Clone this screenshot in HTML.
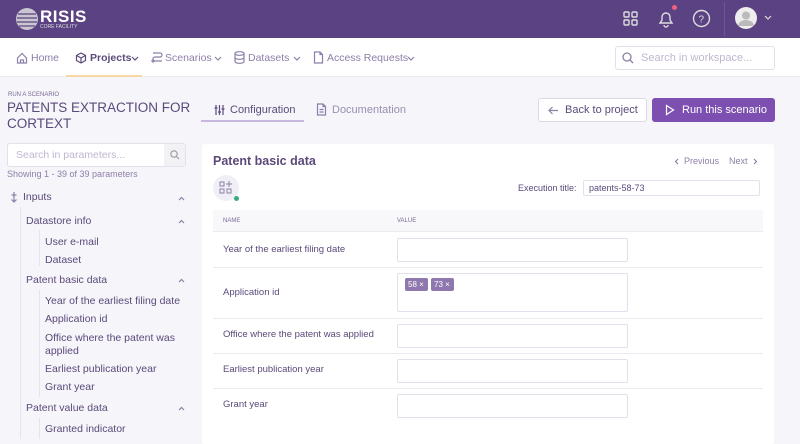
<!DOCTYPE html><html><head><style>
*{box-sizing:border-box;margin:0;padding:0}
body{width:800px;height:439px;overflow:hidden;background:#f5f5fa;font-family:"Liberation Sans",sans-serif;color:#5b4a7a;position:relative}
.a{position:absolute}
.t{position:absolute;white-space:nowrap}
svg.i{position:absolute;fill:none;stroke:#8d7fa8;stroke-width:1.2}
</style></head><body>
<div class="a" style="left:0;top:0;width:800px;height:38px;background:#5b4282"></div>
<svg class="a" style="left:15px;top:7px" width="24" height="24"><circle cx="12" cy="12" r="11" fill="#ddd" opacity=".85"/><g stroke="#5b4282" stroke-width="1.2"><line x1="3" y1="7" x2="21" y2="7"/><line x1="2" y1="11" x2="22" y2="11"/><line x1="2" y1="15" x2="22" y2="15"/><line x1="4" y1="19" x2="20" y2="19"/></g></svg>
<div class="t" style="left:40px;top:7px;color:#fff;font-size:17px;font-weight:bold;letter-spacing:0.5px">RISIS</div>
<div class="t" style="left:40px;top:24px;color:#ddd;font-size:5px">CORE FACILITY</div>
<svg class="a" style="left:622px;top:10px" width="18" height="18" fill="none" stroke="#ddd" stroke-width="1.4"><rect x="2" y="2" width="5" height="5" rx="1"/><rect x="10" y="2" width="5" height="5" rx="1"/><rect x="2" y="10" width="5" height="5" rx="1"/><rect x="10" y="10" width="5" height="5" rx="1"/></svg>
<svg class="a" style="left:656px;top:8px" width="20" height="20" fill="none" stroke="#ddd" stroke-width="1.4"><path d="M4 15h12l-2-3V9a4 4 0 0 0-8 0v3z"/><path d="M8 17a2 2 0 0 0 4 0"/></svg>
<div class="a" style="left:672px;top:5px;width:5px;height:5px;border-radius:50%;background:#f06080"></div>
<svg class="a" style="left:692px;top:9px" width="19" height="19" fill="none" stroke="#ddd" stroke-width="1.4"><circle cx="9.5" cy="9.5" r="8"/><text x="6.5" y="13.5" font-size="10" fill="#ddd" stroke="none" font-family="Liberation Sans">?</text></svg>
<div class="a" style="left:724px;top:2px;width:1px;height:34px;background:#6e5894"></div>
<svg class="a" style="left:735px;top:7px" width="22" height="22"><circle cx="11" cy="11" r="11" fill="#eee"/><circle cx="11" cy="8.5" r="4" fill="#bbb"/><path d="M3 19a8 6 0 0 1 16 0z" fill="#bbb"/></svg>
<svg class="a" style="left:764px;top:15px" width="8" height="6" fill="none" stroke="#ddd" stroke-width="1.2"><path d="M1 1l3 3 3-3"/></svg>
<div class="a" style="left:0;top:38px;width:800px;height:39px;background:#fff;border-bottom:1px solid #eceaf2"></div>
<div class="a" style="left:66px;top:75px;width:76px;height:2px;background:#f5d9a0"></div>
<svg class="i" style="left:16px;top:52px" width="12" height="12"><path d="M1.5 6L6 1.5 10.5 6V11H1.5z M4.5 11V8h3v3"/></svg>
<div class="t" style="left:31px;top:52px;font-size:10.5px;color:#8d7fa8">Home</div>
<svg class="i" style="left:75px;top:52px;stroke:#5b4a7a" width="12" height="12"><path d="M6 1l4.5 2.5v5L6 11 1.5 8.5v-5z M1.5 3.5L6 6l4.5-2.5 M6 6v5"/></svg>
<div class="t" style="left:90px;top:52px;font-size:10.5px;color:#5b4a7a;font-weight:bold">Projects</div>
<svg class="i" style="left:131px;top:56px;stroke:#5b4a7a" width="8" height="6"><path d="M1 1l3 3 3-3"/></svg>
<svg class="i" style="left:151px;top:51px" width="12" height="13"><path d="M2 2h7a2 2 0 0 1 0 4H4a2 2 0 0 0 0 4h7"/><circle cx="2" cy="10" r="1"/></svg>
<div class="t" style="left:165px;top:52px;font-size:10.5px;color:#8d7fa8">Scenarios</div>
<svg class="i" style="left:214px;top:56px" width="8" height="6"><path d="M1 1l3 3 3-3"/></svg>
<svg class="i" style="left:234px;top:51px" width="11" height="13"><ellipse cx="5.5" cy="2.5" rx="4.5" ry="1.8"/><path d="M1 2.5v8c0 1 2 1.8 4.5 1.8s4.5-.8 4.5-1.8v-8 M1 6.5c0 1 2 1.8 4.5 1.8s4.5-.8 4.5-1.8"/></svg>
<div class="t" style="left:248px;top:52px;font-size:10.5px;color:#8d7fa8">Datasets</div>
<svg class="i" style="left:293px;top:56px" width="8" height="6"><path d="M1 1l3 3 3-3"/></svg>
<svg class="i" style="left:313px;top:51px" width="11" height="13"><path d="M7 1H1.5v11H9.5V3.5z M7 1v2.5h2.5"/></svg>
<div class="t" style="left:327px;top:52px;font-size:10.5px;color:#8d7fa8">Access Requests</div>
<svg class="i" style="left:407px;top:56px" width="8" height="6"><path d="M1 1l3 3 3-3"/></svg>
<div class="a" style="left:615px;top:46px;width:160px;height:24px;border:1px solid #e2e0ea;border-radius:3px;background:#fff"></div>
<svg class="a" style="left:622px;top:52px" width="12" height="12" fill="none" stroke="#8d7fa8" stroke-width="1.3"><circle cx="5" cy="5" r="4"/><line x1="8" y1="8" x2="11" y2="11"/></svg>
<div class="t" style="left:641px;top:52px;font-size:11px;color:#c0b8d0">Search in workspace...</div>
<div class="t" style="left:8px;top:92px;font-size:6px;color:#7a6a96">RUN A SCENARIO</div>
<div class="t" style="left:7px;top:100px;font-size:13.5px;color:#5b4a7a;line-height:15.5px">PATENTS EXTRACTION FOR<br>CORTEXT</div>
<svg class="i" style="left:214px;top:104px;stroke:#5b4a7a" width="11" height="12"><path d="M2 1v10 M5.5 1v10 M9 1v10 M0.5 4h3 M4 8h3 M7.5 5h3"/></svg>
<div class="t" style="left:230px;top:104px;font-size:11px;color:#5b4a7a">Configuration</div>
<div class="a" style="left:201px;top:120px;width:103px;height:2px;background:#c8b8e0"></div>
<svg class="i" style="left:316px;top:103px" width="11" height="13"><path d="M7 1H1.5v11H9.5V3.5z M7 1v2.5h2.5 M3.5 6.5h4 M3.5 9h4"/></svg>
<div class="t" style="left:332px;top:104px;font-size:11px;color:#9a8fb0">Documentation</div>
<div class="a" style="left:538px;top:98px;width:109px;height:24px;border:1px solid #dcd8e6;border-radius:3px;background:#fff"></div>
<svg class="i" style="left:548px;top:106px" width="11" height="9"><path d="M10 4.5H1 M4.5 1L1 4.5 4.5 8"/></svg>
<div class="t" style="left:565px;top:104px;font-size:11px;color:#5b4a7a">Back to project</div>
<div class="a" style="left:652px;top:98px;width:123px;height:24px;border-radius:3px;background:#7c4fb0"></div>
<svg class="i" style="left:665px;top:104px;stroke:#fff" width="10" height="12"><path d="M1.5 1.5L8.5 6 1.5 10.5z"/></svg>
<div class="t" style="left:682px;top:104px;font-size:11px;color:#fff">Run this scenario</div>
<div class="a" style="left:7px;top:143px;width:179px;height:24px;border:1px solid #e2e0ea;border-radius:3px;background:#fff"></div>
<div class="a" style="left:164px;top:144px;width:21px;height:22px;background:#f2f2f6"></div>
<svg class="a" style="left:170px;top:150px" width="10" height="10" fill="none" stroke="#999" stroke-width="1.1"><circle cx="4" cy="4" r="3.2"/><line x1="6.5" y1="6.5" x2="9" y2="9"/></svg>
<div class="t" style="left:16px;top:149px;font-size:10.5px;color:#c0b8d0">Search in parameters...</div>
<div class="t" style="left:7px;top:169px;font-size:9px;color:#8d7fa8">Showing 1 - 39 of 39 parameters</div>
<svg class="i" style="left:10px;top:191px" width="8" height="13"><path d="M4 1v10 M1.5 8.5L4 11l2.5-2.5 M1.5 4h5"/></svg>
<div class="t" style="left:23px;top:191px;font-size:10.5px;color:#5b4a7a">Inputs</div>
<div class="a" style="left:20px;top:207px;width:1px;height:232px;background:#e6e2ee"></div>
<div class="a" style="left:39px;top:230px;width:1px;height:36px;background:#e6e2ee"></div>
<div class="a" style="left:39px;top:290px;width:1px;height:107px;background:#e6e2ee"></div>
<div class="a" style="left:39px;top:418px;width:1px;height:21px;background:#e6e2ee"></div>
<div style="font-size:10.5px;color:#5b4a7a">
<div class="t" style="left:26px;top:215px">Datastore info</div>
<div class="t" style="left:45px;top:236px">User e-mail</div>
<div class="t" style="left:45px;top:254px">Dataset</div>
<div class="t" style="left:26px;top:274px">Patent basic data</div>
<div class="t" style="left:45px;top:295px">Year of the earliest filing date</div>
<div class="t" style="left:45px;top:313px">Application id</div>
<div class="t" style="left:45px;top:332px;line-height:13px">Office where the patent was<br>applied</div>
<div class="t" style="left:45px;top:363px">Earliest publication year</div>
<div class="t" style="left:45px;top:381px">Grant year</div>
<div class="t" style="left:26px;top:402px">Patent value data</div>
<div class="t" style="left:45px;top:423px">Granted indicator</div>
</div>
<svg class="i" style="left:178px;top:196px" width="7" height="5"><path d="M1 4l2.5-2.5L6 4"/></svg>
<svg class="i" style="left:178px;top:219px" width="7" height="5"><path d="M1 4l2.5-2.5L6 4"/></svg>
<svg class="i" style="left:178px;top:278px" width="7" height="5"><path d="M1 4l2.5-2.5L6 4"/></svg>
<svg class="i" style="left:178px;top:406px" width="7" height="5"><path d="M1 4l2.5-2.5L6 4"/></svg>
<div class="a" style="left:202px;top:144px;width:572px;height:300px;background:#fff;border-radius:3px"></div>
<div class="t" style="left:213px;top:154px;font-size:12.5px;color:#5b4a7a;font-weight:bold">Patent basic data</div>
<svg class="i" style="left:674px;top:158px" width="5" height="7"><path d="M4 1L1.5 3.5 4 6"/></svg>
<div class="t" style="left:684px;top:156px;font-size:9px;color:#8d7fa8">Previous</div>
<div class="t" style="left:729px;top:156px;font-size:9px;color:#8d7fa8">Next</div>
<svg class="i" style="left:753px;top:158px" width="5" height="7"><path d="M1 1l2.5 2.5L1 6"/></svg>
<div class="a" style="left:213px;top:175px;width:26px;height:26px;border-radius:50%;background:#f0eff5"></div>
<svg class="a" style="left:219px;top:181px" width="14" height="14" fill="none" stroke="#8d7fa8" stroke-width="1"><rect x="1" y="1" width="4" height="4"/><rect x="1" y="8" width="4" height="4"/><rect x="8" y="8" width="4" height="4"/><path d="M10 0v6M7 3h6"/></svg>
<div class="a" style="left:234px;top:196px;width:5px;height:5px;border-radius:50%;background:#3aa880"></div>
<div class="t" style="left:518px;top:183px;font-size:9px;color:#5b4a7a">Execution title:</div>
<div class="a" style="left:583px;top:180px;width:177px;height:16px;border:1px solid #e2e0ea;border-radius:2px"></div>
<div class="t" style="left:589px;top:183px;font-size:9px;color:#5b4a7a">patents-58-73</div>
<div class="a" style="left:213px;top:210px;width:550px;height:22px;background:#f8f8fb;border-bottom:1px solid #ece9f1"></div>
<div class="t" style="left:223px;top:218px;font-size:6px;color:#7a6a96">NAME</div>
<div class="t" style="left:397px;top:218px;font-size:6px;color:#7a6a96">VALUE</div>
<div style="font-size:9.5px;color:#5b4a7a">
<div class="t" style="left:223px;top:244px">Year of the earliest filing date</div>
<div class="t" style="left:223px;top:287px">Application id</div>
<div class="t" style="left:223px;top:329px">Office where the patent was applied</div>
<div class="t" style="left:223px;top:364px">Earliest publication year</div>
<div class="t" style="left:223px;top:399px">Grant year</div>
</div>
<div class="a" style="left:213px;top:267px;width:550px;height:1px;background:#ece9f1"></div>
<div class="a" style="left:213px;top:318px;width:550px;height:1px;background:#ece9f1"></div>
<div class="a" style="left:213px;top:353px;width:550px;height:1px;background:#ece9f1"></div>
<div class="a" style="left:213px;top:388px;width:550px;height:1px;background:#ece9f1"></div>
<div class="a" style="left:397px;top:238px;width:231px;height:24px;border:1px solid #e2e0ea;border-radius:2px"></div>
<div class="a" style="left:397px;top:273px;width:231px;height:39px;border:1px solid #e2e0ea;border-radius:2px"></div>
<div class="a" style="left:397px;top:324px;width:231px;height:24px;border:1px solid #e2e0ea;border-radius:2px"></div>
<div class="a" style="left:397px;top:359px;width:231px;height:24px;border:1px solid #e2e0ea;border-radius:2px"></div>
<div class="a" style="left:397px;top:394px;width:231px;height:24px;border:1px solid #e2e0ea;border-radius:2px"></div>
<div class="a" style="left:405px;top:278px;width:23px;height:13px;background:#8e78ad;border-radius:2px;color:#fff;font-size:8px;padding:2px 3px">58 ×</div>
<div class="a" style="left:431px;top:278px;width:23px;height:13px;background:#8e78ad;border-radius:2px;color:#fff;font-size:8px;padding:2px 3px">73 ×</div>
</body></html>
